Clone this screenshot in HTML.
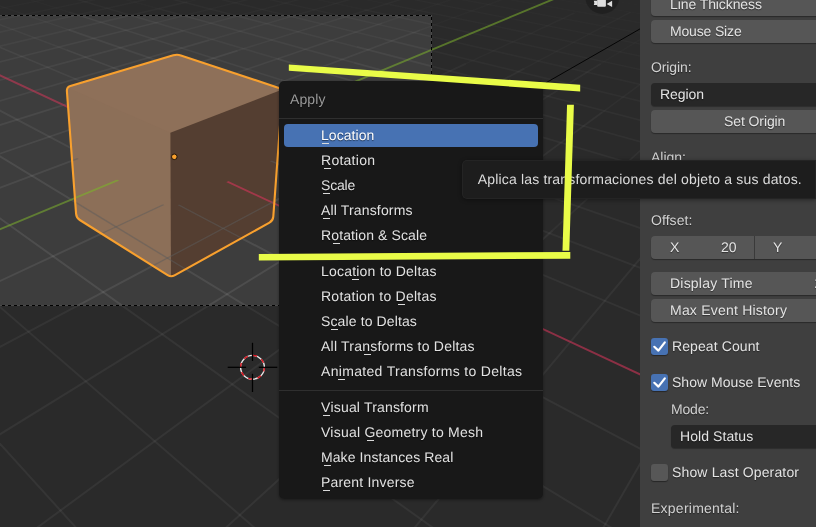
<!DOCTYPE html>
<html><head><meta charset="utf-8"><title>Blender Apply menu</title>
<style>
html,body{margin:0;padding:0;background:#2b2b2b;overflow:hidden;}
html{width:816px;height:527px;}
body{-webkit-font-smoothing:antialiased;text-rendering:geometricPrecision;width:816px;height:527px;position:relative;overflow:hidden;font-family:"Liberation Sans",sans-serif;font-size:14px;color:#e4e4e4;}
#scene{position:absolute;left:0;top:0;}
.abs{position:absolute;}
#menu,#panel,#tip{will-change:transform;}
/* right panel */
#panel{position:absolute;left:640px;top:0;width:176px;height:527px;background:#3f3f3f;overflow:hidden;}
.btn{position:absolute;left:11px;width:180px;height:23px;background:#565656;border-radius:4px;box-shadow:0 1px 1px rgba(0,0,0,.35);}
.btn span,.fld span,.lbl{position:absolute;white-space:nowrap;line-height:16px;text-shadow:0 1px 1px rgba(0,0,0,.45);}
.fld{position:absolute;height:23px;background:#272727;border-radius:4px;box-shadow:0 1px 1px rgba(0,0,0,.3);}
.lbl{color:#d2d2d2;}
.cb{position:absolute;left:11px;width:17px;height:17px;border-radius:3px;}
.cb.on{background:#4772b3;box-shadow:0 1px 1px rgba(0,0,0,.4);}
.cb.off{background:#575757;box-shadow:0 1px 1px rgba(0,0,0,.4);}
/* menu */
#menushadow{position:absolute;left:279px;top:81px;width:264px;height:418px;border-radius:5px;box-shadow:0 1px 3px 0 rgba(0,0,0,.4);}
#menu{position:absolute;left:279px;top:81px;width:264px;height:418px;background:#181818;border-radius:5px;}
#menu .t{position:absolute;left:42px;white-space:nowrap;line-height:16px;color:#e2e2e2;text-shadow:0 1px 1px rgba(0,0,0,.5);}
#menu .t u{text-decoration:none;position:relative;}
#menu .t u::after{content:'';position:absolute;left:50%;margin-left:-2.6px;width:7px;top:15.8px;height:1.3px;background:#dadada;}
#menu .sep{position:absolute;left:0;width:264px;height:1px;background:#2f2f2f;}
#hl{position:absolute;left:5px;top:43px;width:254px;height:23px;background:#4772b3;border-radius:4px;}
#tip{position:absolute;left:462.3px;top:160px;width:353.7px;overflow:hidden;height:38.8px;background:#1d1d1d;border-radius:5px 0 0 5px;box-shadow:inset 0 0 0 1px rgba(255,255,255,.035),0 1px 4px rgba(0,0,0,.4);}
#tip span{position:absolute;left:15px;top:11px;white-space:nowrap;line-height:16px;color:#dcdcdc;}
</style></head><body>
<svg id="scene" width="640" height="527" viewBox="0 0 640 527">
<defs><clipPath id="fc"><polygon points="72.4,155.6 170.7,208.5 276.9,158.1 272.3,220.3 171.0,276.5 77.1,217.4"/></clipPath><clipPath id="sc"><path d="M66.9 91.1 Q66.6 87.1 70.4 85.9 L173.3 55.3 Q177.1 54.2 180.9 55.4 L278.9 88.0 Q282.7 89.2 282.4 93.2 L273.3 216.7 Q273.0 220.7 269.5 222.6 L174.5 275.4 Q171.0 277.3 167.6 275.2 L79.8 220.0 Q76.4 217.8 76.1 213.9 Z"/></clipPath></defs>
<rect width="640" height="527" fill="#3d3d3d"/>
<g id="grid"><line x1="-59.2" y1="-58.0" x2="-43.5" y2="-60.0" stroke="#fff" stroke-width="1.32" stroke-opacity="0.009" />
<line x1="-59.0" y1="-53.4" x2="-9.5" y2="-59.8" stroke="#fff" stroke-width="1.32" stroke-opacity="0.009" />
<line x1="-58.8" y1="-48.4" x2="26.6" y2="-60.0" stroke="#fff" stroke-width="1.32" stroke-opacity="0.009" />
<line x1="-58.6" y1="-43.0" x2="60.6" y2="-59.8" stroke="#fff" stroke-width="1.32" stroke-opacity="0.009" />
<line x1="-58.3" y1="-37.3" x2="96.7" y2="-59.9" stroke="#fff" stroke-width="1.32" stroke-opacity="0.009" />
<line x1="-58.1" y1="-31.1" x2="130.9" y2="-59.7" stroke="#fff" stroke-width="1.32" stroke-opacity="0.009" />
<line x1="-57.8" y1="-24.3" x2="166.9" y2="-59.9" stroke="#fff" stroke-width="1.32" stroke-opacity="0.009" />
<line x1="-57.4" y1="-17.1" x2="202.9" y2="-60.0" stroke="#fff" stroke-width="1.32" stroke-opacity="0.009" />
<line x1="-57.1" y1="-9.1" x2="112.2" y2="-38.3" stroke="#fff" stroke-width="1.37" stroke-opacity="0.013" />
<line x1="112.2" y1="-38.3" x2="237.1" y2="-59.8" stroke="#fff" stroke-width="1.32" stroke-opacity="0.009" />
<line x1="-59.9" y1="0.2" x2="136.9" y2="-35.4" stroke="#fff" stroke-width="1.4" stroke-opacity="0.017" />
<line x1="136.9" y1="-35.4" x2="273.0" y2="-59.9" stroke="#fff" stroke-width="1.32" stroke-opacity="0.009" />
<line x1="-59.7" y1="9.8" x2="160.4" y2="-31.9" stroke="#fff" stroke-width="1.44" stroke-opacity="0.021" />
<line x1="160.4" y1="-31.9" x2="307.4" y2="-59.8" stroke="#fff" stroke-width="1.32" stroke-opacity="0.009" />
<line x1="-59.4" y1="20.3" x2="117.6" y2="-14.9" stroke="#fff" stroke-width="1.51" stroke-opacity="0.029" />
<line x1="117.6" y1="-14.9" x2="246.5" y2="-40.6" stroke="#fff" stroke-width="1.36" stroke-opacity="0.013" />
<line x1="246.5" y1="-40.6" x2="343.3" y2="-59.9" stroke="#fff" stroke-width="1.32" stroke-opacity="0.009" />
<line x1="-59.1" y1="32.1" x2="138.7" y2="-9.5" stroke="#fff" stroke-width="1.54" stroke-opacity="0.033" />
<line x1="138.7" y1="-9.5" x2="276.9" y2="-38.6" stroke="#fff" stroke-width="1.38" stroke-opacity="0.015" />
<line x1="276.9" y1="-38.6" x2="377.7" y2="-59.7" stroke="#fff" stroke-width="1.32" stroke-opacity="0.009" />
<line x1="-58.7" y1="45.2" x2="163.6" y2="-4.3" stroke="#fff" stroke-width="1.58" stroke-opacity="0.037" />
<line x1="163.6" y1="-4.3" x2="309.9" y2="-36.8" stroke="#fff" stroke-width="1.4" stroke-opacity="0.017" />
<line x1="309.9" y1="-36.8" x2="413.5" y2="-59.9" stroke="#fff" stroke-width="1.32" stroke-opacity="0.009" />
<line x1="-58.3" y1="59.9" x2="187.4" y2="1.9" stroke="#fff" stroke-width="1.62" stroke-opacity="0.041" />
<line x1="187.4" y1="1.9" x2="341.9" y2="-34.6" stroke="#fff" stroke-width="1.42" stroke-opacity="0.019" />
<line x1="341.9" y1="-34.6" x2="449.3" y2="-60.0" stroke="#fff" stroke-width="1.32" stroke-opacity="0.009" />
<line x1="-57.9" y1="76.5" x2="158.8" y2="22.0" stroke="#fff" stroke-width="1.67" stroke-opacity="0.048" />
<line x1="158.8" y1="22.0" x2="302.9" y2="-14.3" stroke="#fff" stroke-width="1.52" stroke-opacity="0.031" />
<line x1="302.9" y1="-14.3" x2="405.7" y2="-40.1" stroke="#fff" stroke-width="1.34" stroke-opacity="0.010" />
<line x1="405.7" y1="-40.1" x2="483.8" y2="-59.8" stroke="#fff" stroke-width="1.32" stroke-opacity="0.009" />
<line x1="-59.2" y1="378.4" x2="125.4" y2="582.2" stroke="#fff" stroke-width="2.0" stroke-opacity="0.085" />
<line x1="-57.3" y1="95.5" x2="182.9" y2="30.8" stroke="#fff" stroke-width="1.71" stroke-opacity="0.052" />
<line x1="182.9" y1="30.8" x2="335.6" y2="-10.4" stroke="#fff" stroke-width="1.54" stroke-opacity="0.033" />
<line x1="335.6" y1="-10.4" x2="441.1" y2="-38.8" stroke="#fff" stroke-width="1.34" stroke-opacity="0.010" />
<line x1="441.1" y1="-38.8" x2="519.5" y2="-59.9" stroke="#fff" stroke-width="1.32" stroke-opacity="0.009" />
<line x1="-56.7" y1="257.8" x2="312.1" y2="577.7" stroke="#fff" stroke-width="2.0" stroke-opacity="0.085" />
<line x1="-56.7" y1="117.3" x2="209.1" y2="40.2" stroke="#fff" stroke-width="1.75" stroke-opacity="0.056" />
<line x1="209.1" y1="40.2" x2="369.7" y2="-6.3" stroke="#fff" stroke-width="1.56" stroke-opacity="0.036" />
<line x1="369.7" y1="-6.3" x2="477.2" y2="-37.5" stroke="#fff" stroke-width="1.34" stroke-opacity="0.010" />
<line x1="477.2" y1="-37.5" x2="554.2" y2="-59.8" stroke="#fff" stroke-width="1.32" stroke-opacity="0.009" />
<line x1="-58.2" y1="176.8" x2="510.4" y2="583.1" stroke="#fff" stroke-width="2.0" stroke-opacity="0.085" />
<line x1="-56.0" y1="142.6" x2="237.6" y2="50.6" stroke="#fff" stroke-width="1.78" stroke-opacity="0.061" />
<line x1="237.6" y1="50.6" x2="405.4" y2="-2.0" stroke="#fff" stroke-width="1.58" stroke-opacity="0.038" />
<line x1="405.4" y1="-2.0" x2="513.9" y2="-36.1" stroke="#fff" stroke-width="1.34" stroke-opacity="0.010" />
<line x1="513.9" y1="-36.1" x2="589.9" y2="-59.9" stroke="#fff" stroke-width="1.32" stroke-opacity="0.009" />
<line x1="-59.3" y1="120.4" x2="695.2" y2="578.6" stroke="#fff" stroke-width="1.99" stroke-opacity="0.084" />
<line x1="-55.2" y1="172.5" x2="217.9" y2="79.2" stroke="#fff" stroke-width="1.84" stroke-opacity="0.067" />
<line x1="217.9" y1="79.2" x2="382.5" y2="23.0" stroke="#fff" stroke-width="1.68" stroke-opacity="0.048" />
<line x1="382.5" y1="23.0" x2="489.6" y2="-13.6" stroke="#fff" stroke-width="1.48" stroke-opacity="0.026" />
<line x1="489.6" y1="-13.6" x2="566.9" y2="-40.0" stroke="#fff" stroke-width="1.32" stroke-opacity="0.009" />
<line x1="566.9" y1="-40.0" x2="624.6" y2="-59.7" stroke="#fff" stroke-width="1.32" stroke-opacity="0.009" />
<line x1="-57.8" y1="80.1" x2="157.0" y2="193.5" stroke="#fff" stroke-width="1.84" stroke-opacity="0.067" />
<line x1="157.0" y1="193.5" x2="687.0" y2="473.4" stroke="#fff" stroke-width="2.0" stroke-opacity="0.085" />
<line x1="-54.3" y1="208.1" x2="248.4" y2="94.6" stroke="#fff" stroke-width="1.87" stroke-opacity="0.071" />
<line x1="248.4" y1="94.6" x2="420.0" y2="30.2" stroke="#fff" stroke-width="1.7" stroke-opacity="0.051" />
<line x1="420.0" y1="30.2" x2="529.2" y2="-10.7" stroke="#fff" stroke-width="1.48" stroke-opacity="0.026" />
<line x1="529.2" y1="-10.7" x2="604.8" y2="-39.1" stroke="#fff" stroke-width="1.32" stroke-opacity="0.009" />
<line x1="604.8" y1="-39.1" x2="660.2" y2="-59.8" stroke="#fff" stroke-width="1.32" stroke-opacity="0.009" />
<line x1="-59.3" y1="22.6" x2="157.7" y2="113.5" stroke="#fff" stroke-width="1.71" stroke-opacity="0.052" />
<line x1="157.7" y1="113.5" x2="697.8" y2="339.7" stroke="#fff" stroke-width="1.93" stroke-opacity="0.077" />
<line x1="-59.9" y1="308.9" x2="287.7" y2="146.8" stroke="#fff" stroke-width="1.95" stroke-opacity="0.080" />
<line x1="287.7" y1="146.8" x2="466.0" y2="63.6" stroke="#fff" stroke-width="1.78" stroke-opacity="0.060" />
<line x1="466.0" y1="63.6" x2="574.5" y2="13.0" stroke="#fff" stroke-width="1.57" stroke-opacity="0.037" />
<line x1="574.5" y1="13.0" x2="647.5" y2="-21.0" stroke="#fff" stroke-width="1.35" stroke-opacity="0.011" />
<line x1="647.5" y1="-21.0" x2="699.9" y2="-45.5" stroke="#fff" stroke-width="1.32" stroke-opacity="0.009" />
<line x1="-59.9" y1="2.0" x2="66.6" y2="50.0" stroke="#fff" stroke-width="1.59" stroke-opacity="0.038" />
<line x1="66.6" y1="50.0" x2="274.9" y2="129.1" stroke="#fff" stroke-width="1.78" stroke-opacity="0.060" />
<line x1="274.9" y1="129.1" x2="691.6" y2="287.3" stroke="#fff" stroke-width="1.91" stroke-opacity="0.075" />
<line x1="-59.2" y1="378.4" x2="338.9" y2="166.9" stroke="#fff" stroke-width="1.99" stroke-opacity="0.083" />
<line x1="338.9" y1="166.9" x2="524.5" y2="68.4" stroke="#fff" stroke-width="1.79" stroke-opacity="0.061" />
<line x1="524.5" y1="68.4" x2="630.6" y2="12.1" stroke="#fff" stroke-width="1.55" stroke-opacity="0.034" />
<line x1="630.6" y1="12.1" x2="699.3" y2="-24.4" stroke="#fff" stroke-width="1.32" stroke-opacity="0.009" />
<line x1="-58.8" y1="-14.5" x2="68.9" y2="29.9" stroke="#fff" stroke-width="1.51" stroke-opacity="0.030" />
<line x1="68.9" y1="29.9" x2="280.1" y2="103.1" stroke="#fff" stroke-width="1.72" stroke-opacity="0.054" />
<line x1="280.1" y1="103.1" x2="695.7" y2="247.4" stroke="#fff" stroke-width="1.87" stroke-opacity="0.070" />
<line x1="-58.2" y1="470.1" x2="414.5" y2="178.6" stroke="#fff" stroke-width="2.0" stroke-opacity="0.085" />
<line x1="414.5" y1="178.6" x2="600.8" y2="63.7" stroke="#fff" stroke-width="1.77" stroke-opacity="0.059" />
<line x1="600.8" y1="63.7" x2="699.4" y2="2.9" stroke="#fff" stroke-width="1.49" stroke-opacity="0.027" />
<line x1="-59.4" y1="-28.9" x2="68.7" y2="12.0" stroke="#fff" stroke-width="1.44" stroke-opacity="0.021" />
<line x1="68.7" y1="12.0" x2="280.7" y2="79.8" stroke="#fff" stroke-width="1.67" stroke-opacity="0.047" />
<line x1="280.7" y1="79.8" x2="699.2" y2="213.6" stroke="#fff" stroke-width="1.83" stroke-opacity="0.066" />
<line x1="-31.2" y1="577.9" x2="420.1" y2="246.2" stroke="#fff" stroke-width="2.0" stroke-opacity="0.085" />
<line x1="420.1" y1="246.2" x2="602.3" y2="112.3" stroke="#fff" stroke-width="1.86" stroke-opacity="0.069" />
<line x1="602.3" y1="112.3" x2="699.6" y2="40.8" stroke="#fff" stroke-width="1.63" stroke-opacity="0.043" />
<line x1="-59.8" y1="-41.2" x2="66.5" y2="-3.7" stroke="#fff" stroke-width="1.36" stroke-opacity="0.013" />
<line x1="66.5" y1="-3.7" x2="277.6" y2="58.8" stroke="#fff" stroke-width="1.61" stroke-opacity="0.041" />
<line x1="277.6" y1="58.8" x2="694.2" y2="182.2" stroke="#fff" stroke-width="1.79" stroke-opacity="0.061" />
<line x1="164.8" y1="583.3" x2="552.5" y2="230.5" stroke="#fff" stroke-width="2.0" stroke-opacity="0.085" />
<line x1="552.5" y1="230.5" x2="699.8" y2="96.5" stroke="#fff" stroke-width="1.8" stroke-opacity="0.062" />
<line x1="-59.0" y1="-51.4" x2="31.0" y2="-26.6" stroke="#fff" stroke-width="1.32" stroke-opacity="0.009" />
<line x1="31.0" y1="-26.6" x2="158.6" y2="8.7" stroke="#fff" stroke-width="1.46" stroke-opacity="0.024" />
<line x1="158.6" y1="8.7" x2="353.9" y2="62.6" stroke="#fff" stroke-width="1.64" stroke-opacity="0.044" />
<line x1="353.9" y1="62.6" x2="697.3" y2="157.4" stroke="#fff" stroke-width="1.76" stroke-opacity="0.058" />
<line x1="371.3" y1="579.3" x2="698.4" y2="189.1" stroke="#fff" stroke-width="1.98" stroke-opacity="0.083" />
<line x1="-55.9" y1="-59.8" x2="33.1" y2="-36.8" stroke="#fff" stroke-width="1.32" stroke-opacity="0.009" />
<line x1="33.1" y1="-36.8" x2="161.0" y2="-3.7" stroke="#fff" stroke-width="1.4" stroke-opacity="0.017" />
<line x1="161.0" y1="-3.7" x2="356.7" y2="46.9" stroke="#fff" stroke-width="1.59" stroke-opacity="0.038" />
<line x1="356.7" y1="46.9" x2="693.1" y2="133.8" stroke="#fff" stroke-width="1.72" stroke-opacity="0.053" />
<line x1="570.4" y1="584.7" x2="698.3" y2="363.0" stroke="#fff" stroke-width="2.0" stroke-opacity="0.085" />
<line x1="-23.1" y1="-59.9" x2="68.0" y2="-37.8" stroke="#fff" stroke-width="1.32" stroke-opacity="0.009" />
<line x1="68.0" y1="-37.8" x2="195.1" y2="-6.9" stroke="#fff" stroke-width="1.39" stroke-opacity="0.016" />
<line x1="195.1" y1="-6.9" x2="384.2" y2="39.1" stroke="#fff" stroke-width="1.56" stroke-opacity="0.036" />
<line x1="384.2" y1="39.1" x2="695.9" y2="114.8" stroke="#fff" stroke-width="1.68" stroke-opacity="0.049" />
<line x1="10.9" y1="-59.7" x2="102.5" y2="-38.7" stroke="#fff" stroke-width="1.32" stroke-opacity="0.009" />
<line x1="102.5" y1="-38.7" x2="228.0" y2="-10.0" stroke="#fff" stroke-width="1.38" stroke-opacity="0.015" />
<line x1="228.0" y1="-10.0" x2="410.1" y2="31.7" stroke="#fff" stroke-width="1.54" stroke-opacity="0.033" />
<line x1="410.1" y1="31.7" x2="698.4" y2="97.8" stroke="#fff" stroke-width="1.65" stroke-opacity="0.045" />
<line x1="43.6" y1="-59.9" x2="170.8" y2="-32.3" stroke="#fff" stroke-width="1.32" stroke-opacity="0.009" />
<line x1="170.8" y1="-32.3" x2="363.3" y2="9.5" stroke="#fff" stroke-width="1.44" stroke-opacity="0.022" />
<line x1="363.3" y1="9.5" x2="694.8" y2="81.4" stroke="#fff" stroke-width="1.6" stroke-opacity="0.039" />
<line x1="77.7" y1="-59.7" x2="203.7" y2="-33.8" stroke="#fff" stroke-width="1.32" stroke-opacity="0.009" />
<line x1="203.7" y1="-33.8" x2="389.7" y2="4.5" stroke="#fff" stroke-width="1.42" stroke-opacity="0.020" />
<line x1="389.7" y1="4.5" x2="697.1" y2="67.8" stroke="#fff" stroke-width="1.56" stroke-opacity="0.035" />
<line x1="110.4" y1="-59.8" x2="234.0" y2="-35.6" stroke="#fff" stroke-width="1.32" stroke-opacity="0.009" />
<line x1="234.0" y1="-35.6" x2="414.8" y2="-0.2" stroke="#fff" stroke-width="1.4" stroke-opacity="0.017" />
<line x1="414.8" y1="-0.2" x2="699.1" y2="55.5" stroke="#fff" stroke-width="1.52" stroke-opacity="0.031" />
<line x1="143.0" y1="-60.0" x2="263.5" y2="-37.5" stroke="#fff" stroke-width="1.32" stroke-opacity="0.009" />
<line x1="263.5" y1="-37.5" x2="435.6" y2="-5.3" stroke="#fff" stroke-width="1.37" stroke-opacity="0.014" />
<line x1="435.6" y1="-5.3" x2="696.0" y2="43.4" stroke="#fff" stroke-width="1.49" stroke-opacity="0.027" />
<line x1="177.2" y1="-59.8" x2="294.6" y2="-38.8" stroke="#fff" stroke-width="1.32" stroke-opacity="0.009" />
<line x1="294.6" y1="-38.8" x2="458.4" y2="-9.6" stroke="#fff" stroke-width="1.35" stroke-opacity="0.011" />
<line x1="458.4" y1="-9.6" x2="697.9" y2="33.2" stroke="#fff" stroke-width="1.45" stroke-opacity="0.023" />
<line x1="209.7" y1="-60.0" x2="396.6" y2="-28.0" stroke="#fff" stroke-width="1.32" stroke-opacity="0.009" />
<line x1="396.6" y1="-28.0" x2="699.7" y2="23.9" stroke="#fff" stroke-width="1.4" stroke-opacity="0.017" />
<line x1="244.0" y1="-59.8" x2="420.2" y2="-30.9" stroke="#fff" stroke-width="1.32" stroke-opacity="0.009" />
<line x1="420.2" y1="-30.9" x2="696.9" y2="14.6" stroke="#fff" stroke-width="1.36" stroke-opacity="0.012" />
<line x1="276.5" y1="-59.9" x2="445.7" y2="-33.2" stroke="#fff" stroke-width="1.32" stroke-opacity="0.009" />
<line x1="445.7" y1="-33.2" x2="698.6" y2="6.7" stroke="#fff" stroke-width="1.32" stroke-opacity="0.009" />
<line x1="310.8" y1="-59.8" x2="467.8" y2="-35.9" stroke="#fff" stroke-width="1.32" stroke-opacity="0.009" />
<line x1="467.8" y1="-35.9" x2="696.1" y2="-1.3" stroke="#fff" stroke-width="1.32" stroke-opacity="0.009" />
<line x1="343.3" y1="-59.9" x2="491.9" y2="-38.1" stroke="#fff" stroke-width="1.32" stroke-opacity="0.009" />
<line x1="491.9" y1="-38.1" x2="697.7" y2="-8.0" stroke="#fff" stroke-width="1.32" stroke-opacity="0.009" />
<line x1="377.7" y1="-59.7" x2="699.1" y2="-14.3" stroke="#fff" stroke-width="1.32" stroke-opacity="0.009" />
<line x1="410.1" y1="-59.9" x2="696.9" y2="-20.7" stroke="#fff" stroke-width="1.32" stroke-opacity="0.009" />
<line x1="444.6" y1="-59.7" x2="698.2" y2="-26.2" stroke="#fff" stroke-width="1.32" stroke-opacity="0.009" />
<line x1="476.9" y1="-59.8" x2="699.6" y2="-31.4" stroke="#fff" stroke-width="1.32" stroke-opacity="0.009" />
<line x1="509.2" y1="-60.0" x2="697.5" y2="-36.6" stroke="#fff" stroke-width="1.32" stroke-opacity="0.009" />
<line x1="543.8" y1="-59.8" x2="698.7" y2="-41.2" stroke="#fff" stroke-width="1.32" stroke-opacity="0.009" />
<line x1="576.0" y1="-60.0" x2="699.9" y2="-45.5" stroke="#fff" stroke-width="1.32" stroke-opacity="0.009" />
<line x1="610.7" y1="-59.8" x2="698.0" y2="-49.9" stroke="#fff" stroke-width="1.32" stroke-opacity="0.009" />
<line x1="642.8" y1="-59.9" x2="699.1" y2="-53.7" stroke="#fff" stroke-width="1.32" stroke-opacity="0.009" />
<line x1="677.6" y1="-59.8" x2="697.3" y2="-57.6" stroke="#fff" stroke-width="1.32" stroke-opacity="0.009" /></g>
<path d="M0 0H640V527H0Z M0 15.5H431.5V305.5H0Z" fill="#000" fill-opacity="0.31" fill-rule="evenodd"/>
<g id="axes"><line x1="-58.6" y1="48.0" x2="157.4" y2="148.9" stroke="#d03558" stroke-width="1.9" stroke-opacity="0.558" />
<line x1="157.4" y1="148.9" x2="693.0" y2="399.1" stroke="#d03558" stroke-width="1.9" stroke-opacity="0.593" />
<line x1="-53.1" y1="251.3" x2="286.0" y2="110.4" stroke="#7cb02c" stroke-width="1.9" stroke-opacity="0.558" />
<line x1="286.0" y1="110.4" x2="462.2" y2="37.1" stroke="#7cb02c" stroke-width="1.9" stroke-opacity="0.558" />
<line x1="462.2" y1="37.1" x2="570.2" y2="-7.8" stroke="#7cb02c" stroke-width="1.9" stroke-opacity="0.558" />
<line x1="570.2" y1="-7.8" x2="643.1" y2="-38.1" stroke="#7cb02c" stroke-width="1.9" stroke-opacity="0.558" />
<line x1="643.1" y1="-38.1" x2="695.7" y2="-60.0" stroke="#7cb02c" stroke-width="1.9" stroke-opacity="0.558" /></g>
<g clip-path="url(#sc)"><path d="M66.9 91.1 Q66.6 87.1 70.4 85.9 L173.3 55.3 Q177.1 54.2 180.9 55.4 L278.9 88.0 Q282.7 89.2 282.4 93.2 L273.3 216.7 Q273.0 220.7 269.5 222.6 L174.5 275.4 Q171.0 277.3 167.6 275.2 L79.8 220.0 Q76.4 217.8 76.1 213.9 Z" fill="#8c6f58"/><polygon points="170.4,132.7 61.7,85.1 177.1,47.0 287.6,87.5" fill="#8e7059" /><polygon points="170.4,132.7 287.6,87.5 280.3,224.3 171.0,282.5" fill="#543e31" /><g clip-path="url(#fc)"><line x1="-58.7" y1="45.2" x2="413.5" y2="-59.9" stroke="#5c5c5c" stroke-width="1.35" stroke-opacity="0.500" />
<line x1="-58.3" y1="59.9" x2="449.3" y2="-60.0" stroke="#5c5c5c" stroke-width="1.35" stroke-opacity="0.500" />
<line x1="-57.9" y1="76.5" x2="483.8" y2="-59.8" stroke="#5c5c5c" stroke-width="1.35" stroke-opacity="0.500" />
<line x1="-59.2" y1="378.4" x2="125.4" y2="582.2" stroke="#5c5c5c" stroke-width="1.35" stroke-opacity="0.500" />
<line x1="-57.3" y1="95.5" x2="519.5" y2="-59.9" stroke="#5c5c5c" stroke-width="1.35" stroke-opacity="0.500" />
<line x1="-56.7" y1="257.8" x2="312.1" y2="577.7" stroke="#5c5c5c" stroke-width="1.35" stroke-opacity="0.500" />
<line x1="-56.7" y1="117.3" x2="554.2" y2="-59.8" stroke="#5c5c5c" stroke-width="1.35" stroke-opacity="0.500" />
<line x1="-58.2" y1="176.8" x2="510.4" y2="583.1" stroke="#5c5c5c" stroke-width="1.35" stroke-opacity="0.500" />
<line x1="-56.0" y1="142.6" x2="589.9" y2="-59.9" stroke="#5c5c5c" stroke-width="1.35" stroke-opacity="0.500" />
<line x1="-59.3" y1="120.4" x2="695.2" y2="578.6" stroke="#5c5c5c" stroke-width="1.35" stroke-opacity="0.500" />
<line x1="-55.2" y1="172.5" x2="624.6" y2="-59.7" stroke="#5c5c5c" stroke-width="1.35" stroke-opacity="0.500" />
<line x1="-57.8" y1="80.1" x2="687.0" y2="473.4" stroke="#5c5c5c" stroke-width="1.35" stroke-opacity="0.500" />
<line x1="-54.3" y1="208.1" x2="660.2" y2="-59.8" stroke="#5c5c5c" stroke-width="1.35" stroke-opacity="0.500" />
<line x1="-58.6" y1="48.0" x2="693.0" y2="399.1" stroke="#d03558" stroke-width="1.9" stroke-opacity="0.620" />
<line x1="-53.1" y1="251.3" x2="695.7" y2="-60.0" stroke="#7cb02c" stroke-width="1.9" stroke-opacity="0.620" />
<line x1="-59.3" y1="22.6" x2="697.8" y2="339.7" stroke="#5c5c5c" stroke-width="1.35" stroke-opacity="0.500" />
<line x1="-59.9" y1="308.9" x2="699.9" y2="-45.5" stroke="#5c5c5c" stroke-width="1.35" stroke-opacity="0.500" />
<line x1="-59.9" y1="2.0" x2="691.6" y2="287.3" stroke="#5c5c5c" stroke-width="1.35" stroke-opacity="0.500" />
<line x1="-59.2" y1="378.4" x2="699.3" y2="-24.4" stroke="#5c5c5c" stroke-width="1.35" stroke-opacity="0.500" />
<line x1="-58.8" y1="-14.5" x2="695.7" y2="247.4" stroke="#5c5c5c" stroke-width="1.35" stroke-opacity="0.500" />
<line x1="-58.2" y1="470.1" x2="699.4" y2="2.9" stroke="#5c5c5c" stroke-width="1.35" stroke-opacity="0.500" />
<line x1="-59.4" y1="-28.9" x2="699.2" y2="213.6" stroke="#5c5c5c" stroke-width="1.35" stroke-opacity="0.500" />
<line x1="-31.2" y1="577.9" x2="699.6" y2="40.8" stroke="#5c5c5c" stroke-width="1.35" stroke-opacity="0.500" />
<line x1="-59.8" y1="-41.2" x2="694.2" y2="182.2" stroke="#5c5c5c" stroke-width="1.35" stroke-opacity="0.500" />
<line x1="164.8" y1="583.3" x2="699.8" y2="96.5" stroke="#5c5c5c" stroke-width="1.35" stroke-opacity="0.500" />
<line x1="-59.0" y1="-51.4" x2="697.3" y2="157.4" stroke="#5c5c5c" stroke-width="1.35" stroke-opacity="0.500" />
<line x1="371.3" y1="579.3" x2="698.4" y2="189.1" stroke="#5c5c5c" stroke-width="1.35" stroke-opacity="0.500" />
<line x1="-55.9" y1="-59.8" x2="693.1" y2="133.8" stroke="#5c5c5c" stroke-width="1.35" stroke-opacity="0.500" />
<line x1="570.4" y1="584.7" x2="698.3" y2="363.0" stroke="#5c5c5c" stroke-width="1.35" stroke-opacity="0.500" />
<line x1="-23.1" y1="-59.9" x2="695.9" y2="114.8" stroke="#5c5c5c" stroke-width="1.35" stroke-opacity="0.500" /></g></g>
<path d="M66.9 91.1 Q66.6 87.1 70.4 85.9 L173.3 55.3 Q177.1 54.2 180.9 55.4 L278.9 88.0 Q282.7 89.2 282.4 93.2 L273.3 216.7 Q273.0 220.7 269.5 222.6 L174.5 275.4 Q171.0 277.3 167.6 275.2 L79.8 220.0 Q76.4 217.8 76.1 213.9 Z" fill="none" stroke="#f8a02e" stroke-width="2.1" stroke-linejoin="round"/>
<circle cx="174.3" cy="156.8" r="2.8" fill="#f8a02e" stroke="#20140a" stroke-width="1"/>
<g stroke="#4a4a4a" stroke-width="1" fill="none" shape-rendering="crispEdges">
<line x1="0" y1="15.5" x2="432" y2="15.5"/><line x1="431.5" y1="15" x2="431.5" y2="306"/><line x1="0" y1="305.5" x2="432" y2="305.5"/>
</g>
<g stroke="#000" stroke-width="1" stroke-dasharray="3 3" fill="none" shape-rendering="crispEdges">
<line x1="0" y1="15.5" x2="432" y2="15.5" stroke-dashoffset="4"/>
<line x1="431.5" y1="15" x2="431.5" y2="306" stroke-dashoffset="4"/>
<line x1="0" y1="305.5" x2="432" y2="305.5" stroke-dashoffset="4"/>
</g>
<line x1="545.6" y1="83" x2="640" y2="28.9" stroke="#000" stroke-width="1" stroke-opacity="0.9"/>
<g id="cursor" fill="none">
<circle cx="252.5" cy="367.3" r="11.9" stroke="#e8e8e8" stroke-width="1.4"/>
<circle cx="252.5" cy="367.3" r="11.9" stroke="#d8121c" stroke-width="1.4" stroke-dasharray="4.15 5.196"/>
<g stroke="#000" stroke-width="1.25">
<line x1="227.7" y1="367.3" x2="246.1" y2="367.3"/><line x1="258.8" y1="367.3" x2="277.3" y2="367.3"/>
<line x1="252.5" y1="342.8" x2="252.5" y2="361"/><line x1="252.5" y1="373.8" x2="252.5" y2="392"/>
</g></g>
<g id="camicon">
<circle cx="602.3" cy="-3.1" r="17" fill="#1a1a1a" fill-opacity="0.6"/>
<rect x="597.2" y="-4" width="8.7" height="10.7" rx="1" fill="#dedede"/>
<path d="M593.8 0.8 H597.5 V4.9 H593.8 Q594.8 2.85 593.8 0.8Z" fill="#dedede"/>
<path d="M606.6 3.9 L612.1 0.7 V7 Z" fill="#dedede"/>
</g>

</svg>
<div id="panel">
 <div class="btn" style="top:-7px"><span style="left:19px;top:3px;letter-spacing:-0.088px">Line Thickness</span></div>
 <div class="btn" style="top:20px"><span style="left:19px;top:3px;letter-spacing:-0.162px">Mouse Size</span></div>
 <div class="lbl" style="left:11px;top:59px;letter-spacing:-0.106px">Origin:</div>
 <div class="fld" style="left:11px;top:83px;width:180px"><span style="left:9px;top:3px;letter-spacing:-0.075px">Region</span></div>
 <div class="btn" style="top:110px"><span style="left:73px;top:3px;letter-spacing:-0.094px">Set Origin</span></div>
 <div class="lbl" style="left:11px;top:149px;letter-spacing:-0.006px">Align:</div>
 <div class="lbl" style="left:11px;top:212px;letter-spacing:0.069px">Offset:</div>
 <div class="btn" style="top:236px"><span style="left:19px;top:3px">X</span><span style="left:70px;top:3px">20</span><span style="left:122px;top:3px">Y</span><i style="position:absolute;left:103px;top:0;width:1px;height:23px;background:#3a3a3a"></i></div>
 <div class="btn" style="top:272px"><span style="left:19px;top:3px;letter-spacing:0.214px">Display Time</span><span style="left:163.5px;top:3px">2</span></div>
 <div class="btn" style="top:299px"><span style="left:19px;top:3px;letter-spacing:0.213px">Max Event History</span></div>
 <div class="cb on" style="top:338px"><svg width="17" height="17" viewBox="0 0 17 17"><path d="M3.3 8.8 L7.4 12.6 L13.8 4.4" fill="none" stroke="#fff" stroke-width="2.2" stroke-linecap="round" stroke-linejoin="round"/></svg></div>
 <div class="lbl" style="left:32px;top:338px;color:#e4e4e4;letter-spacing:0.099px">Repeat Count</div>
 <div class="cb on" style="top:374px"><svg width="17" height="17" viewBox="0 0 17 17"><path d="M3.3 8.8 L7.4 12.6 L13.8 4.4" fill="none" stroke="#fff" stroke-width="2.2" stroke-linecap="round" stroke-linejoin="round"/></svg></div>
 <div class="lbl" style="left:32px;top:374px;color:#e4e4e4;letter-spacing:0.036px">Show Mouse Events</div>
 <div class="lbl" style="left:31px;top:401px;letter-spacing:-0.18px">Mode:</div>
 <div class="fld" style="left:31px;top:425px;width:160px"><span style="left:9px;top:3px;letter-spacing:0.083px">Hold Status</span></div>
 <div class="cb off" style="top:464px"></div>
 <div class="lbl" style="left:32px;top:464px;color:#e4e4e4;letter-spacing:0.146px">Show Last Operator</div>
 <div class="lbl" style="left:11px;top:500px;letter-spacing:0.242px">Experimental:</div>
</div>
<div id="menushadow"></div>
<div id="menu">
 <div class="t" style="left:11px;top:10px;color:#9a9a9a;letter-spacing:0.117px">Apply</div>
 <div class="sep" style="top:37px"></div>
 <div id="hl"></div>
 <div class="t" style="top:46px;color:#fff;letter-spacing:0.05px"><u>L</u>ocation</div>
 <div class="t" style="top:71px;letter-spacing:0.261px"><u>R</u>otation</div>
 <div class="t" style="top:96px;letter-spacing:-0.208px"><u>S</u>cale</div>
 <div class="t" style="top:121px;letter-spacing:0.156px"><u>A</u>ll Transforms</div>
 <div class="t" style="top:146px;letter-spacing:0.113px">R<u>o</u>tation &amp; Scale</div>
 <div class="sep" style="top:173px"></div>
 <div class="t" style="top:182px;letter-spacing:0.201px">Loca<u>t</u>ion to Deltas</div>
 <div class="t" style="top:207px;letter-spacing:0.246px">Rotation to <u>D</u>eltas</div>
 <div class="t" style="top:232px;letter-spacing:0.116px">S<u>c</u>ale to Deltas</div>
 <div class="t" style="top:257px;letter-spacing:0.216px">All Tra<u>n</u>sforms to Deltas</div>
 <div class="t" style="top:282px;letter-spacing:0.314px">An<u>i</u>mated Transforms to Deltas</div>
 <div class="sep" style="top:309px"></div>
 <div class="t" style="top:318px;letter-spacing:0.167px"><u>V</u>isual Transform</div>
 <div class="t" style="top:343px;letter-spacing:0.23px">Visual <u>G</u>eometry to Mesh</div>
 <div class="t" style="top:368px;letter-spacing:0.086px"><u>M</u>ake Instances Real</div>
 <div class="t" style="top:393px;letter-spacing:0.188px"><u>P</u>arent Inverse</div>
</div>
<div id="tip"><span style="left:15.7px;top:11px;letter-spacing:0.177px">Aplica las transformaciones del objeto a sus datos.</span></div>
<svg class="abs" style="left:0;top:0" width="816" height="527" viewBox="0 0 816 527">
 <g fill="#e9fc48">
  <polygon points="288.8,64.4 580.2,84.8 580.2,91.6 288.8,70.8"/>
  <polygon points="567.05,104.8 573.9,104.8 569.3,250.8 562.5,250.8"/>
  <polygon points="258.8,254 570.3,251.9 570.3,258.7 258.8,260.6"/>
 </g>
</svg>
</body></html>
